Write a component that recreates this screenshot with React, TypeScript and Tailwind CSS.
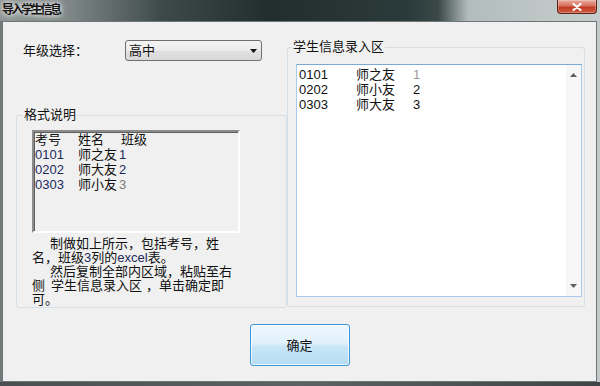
function CloseButton() {
  return (
    <div className="mr-[3px] w-[40px] h-[14px] flex items-center justify-center rounded-b-[4px] border border-t-0 border-[#5a2219] bg-[linear-gradient(#e9ab9d,#d8715e_45%,#c23a22_55%,#cf5d43)] shadow-[inset_0_0_0_1px_rgba(255,255,255,0.25)]">
      <svg width="10" height="8" viewBox="0 0 10 8">
        <path d="M1.5 1 L8.5 7 M8.5 1 L1.5 7" stroke="#fff" strokeWidth="2.2" strokeLinecap="round" />
      </svg>
    </div>
  );
}

function Arrow({ up }: { up?: boolean }) {
  return (
    <svg width="7" height="4" viewBox="0 0 7 4">
      <path d={up ? "M0 4 L3.5 0 L7 4 Z" : "M0 0 L7 0 L3.5 4 Z"} fill="#606060" />
    </svg>
  );
}

const sampleRows = [
  { no: "0101", name: "师之友", cls: "1" },
  { no: "0202", name: "师大友", cls: "2" },
  { no: "0303", name: "师小友", cls: "3" },
];

const inputRows = [
  { no: "0101", name: "师之友", cls: "1" },
  { no: "0202", name: "师小友", cls: "2" },
  { no: "0303", name: "师大友", cls: "3" },
];

export default function App() {
  return (
    <div className="w-[600px] h-[386px] flex flex-col overflow-hidden bg-[#7c8383] font-['Liberation_Sans','Noto_Sans_CJK_SC',sans-serif] text-[13px] leading-[15px] text-[#111]">
      {/* Title bar */}
      <div className="h-[21px] shrink-0 flex items-start justify-between bg-[linear-gradient(to_right,#8f9696_0%,#7d8585_12%,#3e4a4a_27%,#222e2e_45%,#2b3a3a_68%,#3a4848_73%,#b3bcbc_78%,#c6cdcd_100%)]">
        <span className="pl-[2px] pt-[3px] text-[12px] leading-[14px] font-bold tracking-[-2.4px] text-[#151515] [text-shadow:0_0_5px_#fff,0_0_9px_#ddd]">
          导入学生信息
        </span>
        <CloseButton />
      </div>

      <div className="flex-1 flex min-h-0">
        <div className="w-[2px] bg-[#737a7b]" />
        <div className="flex-1 flex flex-col border border-[#6e7676] bg-[#f0f0f0]">
          {/* Main row */}
          <div className="flex items-start pl-[13px] pt-[18px]">
            {/* Left column */}
            <div className="w-[271px] flex flex-col">
              <div className="h-[21px] flex items-center">
                <span className="ml-[7px] w-[102px]">年级选择：</span>
                <div className="w-[137px] h-[21px] flex items-center justify-between pl-[3px] pr-[4px] rounded-[3px] border border-[#707070] bg-[linear-gradient(#f3f3f3,#ebebeb_50%,#e0e0e0_51%,#d9d9d9)]">
                  <span>高中</span>
                  <svg width="7" height="4" viewBox="0 0 7 4">
                    <path d="M0 0 L7 0 L3.5 4 Z" fill="#111" />
                  </svg>
                </div>
              </div>

              <fieldset className="mt-[47px] h-[200px] border border-[#d5dfe5] rounded-[3px]">
                <legend className="ml-[6px] px-[1px] leading-[14px]">格式说明</legend>
                <div className="ml-[15px] mt-[8px] w-[208px] h-[103px] border-2 border-t-[#8c8c8c] border-l-[#8c8c8c] border-r-[#fdfdfd] border-b-[#fdfdfd] shadow-[inset_1px_1px_0_#5e5e5e] pl-[1px]">
                  <div className="flex">
                    <span className="w-[43px]">考号</span>
                    <span className="w-[43px]">姓名</span>
                    <span>班级</span>
                  </div>
                  {sampleRows.map((r, i) => (
                    <div key={r.no} className="flex">
                      <span className="w-[43px] text-[#1c2a5e]">{r.no}</span>
                      <span>{r.name}</span>
                      <span className={`ml-[2px] ${i === 2 ? "text-[#7a7a7a]" : "text-[#1c2a5e]"}`}>{r.cls}</span>
                    </div>
                  ))}
                </div>
                <div className="ml-[15px] mt-[4px] leading-[14px]">
                  <div className="pl-[18px]">制做如上所示，包括考号，姓</div>
                  <div>
                    名，班级<span className="text-[#1c2a5e]">3</span>列的<span className="text-[#1c2a5e]">excel</span>表。
                  </div>
                  <div className="pl-[18px]">然后复制全部内区域，粘贴至右</div>
                  <div>
                    侧<span className="inline-block w-[6px]" />学生信息录入区<span className="inline-block w-[4px]" />，单击确定即
                  </div>
                  <div>可。</div>
                </div>
              </fieldset>
            </div>

            {/* Right group */}
            <fieldset className="w-[298px] h-[267px] border border-[#d5dfe5] rounded-[3px]">
              <legend className="ml-[4px] px-[1px] leading-[14px]">学生信息录入区</legend>
              <div className="ml-[8px] mt-[10px] w-[286px] h-[233px] flex border border-[#a9c9ea] border-t-[#7fa8d4] bg-white">
                <div className="flex-1 pl-[2px] pt-[2px]">
                  {inputRows.map((r, i) => (
                    <div key={r.no} className="flex">
                      <span className="w-[57px]">{r.no}</span>
                      <span className="w-[57px]">{r.name}</span>
                      <span className={i === 0 ? "text-[#9a9a9a]" : ""}>{r.cls}</span>
                    </div>
                  ))}
                </div>
                <div className="w-[15px] flex flex-col items-center justify-between pt-[8px] pb-[8px] bg-[#f7f7f7]">
                  <Arrow up />
                  <Arrow />
                </div>
              </div>
            </fieldset>
          </div>

          {/* Button row */}
          <div className="flex justify-center mt-[16px]">
            <button className="w-[100px] h-[42px] rounded-[3px] border border-[#3a9ad8] bg-[linear-gradient(#eef7fd,#e0f1fb_45%,#c7e5f7_55%,#b6dcf2)] shadow-[inset_0_0_0_1px_rgba(255,255,255,0.7)] text-[13px] text-[#111]">
              确定
            </button>
          </div>
        </div>
        <div className="w-[3px] bg-[#c3c9c9]" />
      </div>
      <div className="h-[4px] shrink-0 bg-[linear-gradient(to_right,#4a5051,#5c6263_50%,#3f4546)]" />
    </div>
  );
}
